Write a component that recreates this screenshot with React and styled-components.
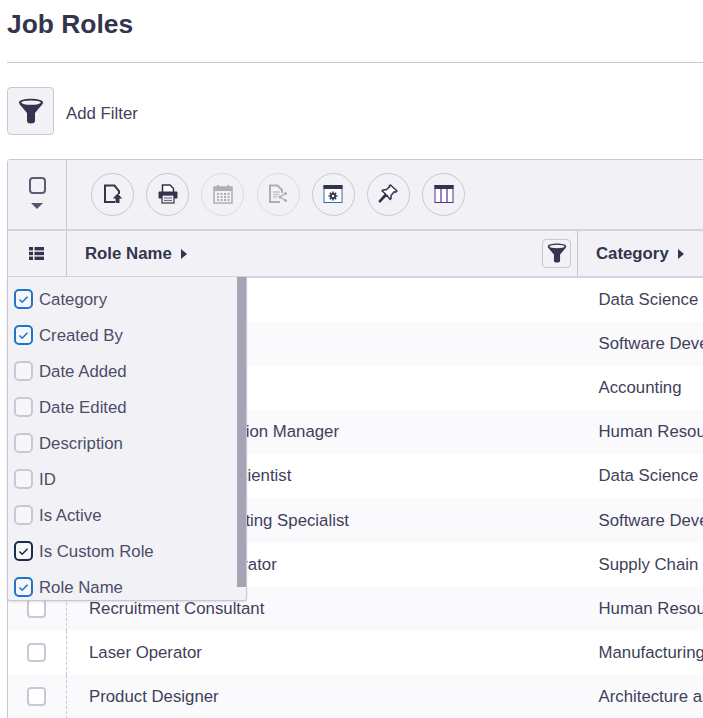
import React from 'react';
import styled, { createGlobalStyle } from 'styled-components';

const INK = '#34344e';
const LINE = '#c8c7d4';
const PANEL = '#f2f2f6';

const Global = createGlobalStyle`
  html, body { margin: 0; padding: 0; background: #fff; overflow: hidden; height: 718px; }
  body { font-family: "Liberation Sans", Arial, sans-serif; color: ${INK}; }
  * { box-sizing: border-box; }
`;
const Page = styled.div`
  position: relative;
  width: 703px;
  height: 718px;
  overflow: hidden;
  padding-left: 7px;
`;
const Title = styled.h1`
  margin: 0;
  height: 63px;
  padding-top: 10px;
  font-size: 26.4px;
  line-height: 29px;
  font-weight: 700;
  border-bottom: 1px solid ${LINE};
  color: ${INK};
`;
const FilterRow = styled.div`
  display: flex;
  align-items: center;
  gap: 12px;
  margin-top: 23px;
  height: 49px;
`;
const FilterButton = styled.button`
  width: 47px;
  height: 48px;
  padding: 0;
  border: 1px solid ${LINE};
  border-radius: 4px;
  background: ${PANEL};
  display: flex;
  align-items: center;
  justify-content: center;
`;
const FilterLabel = styled.span`
  font-size: 16.8px;
  padding-top: 6px;
  color: #3f3f5a;
`;
const Table = styled.div`
  position: relative;
  margin-top: 24px;
  width: 900px;
  border-left: 1px solid ${LINE};
  border-top: 1px solid ${LINE};
  border-top-left-radius: 4px;
`;
const Toolbar = styled.div`
  display: flex;
  height: 71px;
  background: ${PANEL};
  border-bottom: 2px solid #d4d3dd;
`;
const SelectCell = styled.div`
  width: 59px;
  border-right: 1px solid ${LINE};
  display: flex;
  flex-direction: column;
  align-items: center;
  padding-top: 17px;
  gap: 9px;
`;
const BigCheck = styled.span`
  width: 17px;
  height: 17px;
  border: 2px solid #5c5c74;
  border-radius: 4px;
`;
const Caret = styled.span`
  width: 0;
  height: 0;
  border-left: 6px solid transparent;
  border-right: 6px solid transparent;
  border-top: 6px solid #55556c;
`;
const Tools = styled.div`
  display: flex;
  align-items: center;
  gap: 12.2px;
  padding-left: 24px;
  margin-top: -1px;
`;
const Round = styled.button`
  width: 43px;
  height: 43px;
  padding: 0;
  border-radius: 50%;
  border: 1px solid ${p => (p.$off ? '#dcdbe3' : LINE)};
  background: ${PANEL};
  display: flex;
  align-items: center;
  justify-content: center;
`;
const HeaderRow = styled.div`
  display: flex;
  height: 47px;
  background: ${PANEL};
  border-bottom: 2px solid #d4d3dd;
`;
const HeadIcon = styled.div`
  width: 59px;
  border-right: 1px solid ${LINE};
  display: flex;
  align-items: center;
  justify-content: center;
  padding: 0 2px 1px 0;
`;
const HeadCell = styled.div`
  width: ${p => p.$w}px;
  display: flex;
  align-items: center;
  justify-content: space-between;
  border-right: 1px solid ${p => (p.$last ? 'transparent' : LINE)};
  padding: 0 6px 1px ${p => p.$pad}px;
`;
const HeadLabel = styled.span`
  display: flex;
  align-items: center;
  gap: 9px;
  padding-top: 2px;
  font-size: 16.8px;
  font-weight: 700;
  color: ${INK};
`;
const RightTri = styled.span`
  width: 0;
  height: 0;
  border-top: 5px solid transparent;
  border-bottom: 5px solid transparent;
  border-left: 6px solid ${INK};
`;
const SmallFilter = styled.button`
  width: 29px;
  height: 29px;
  padding: 0;
  border: 1px solid ${LINE};
  border-radius: 4px;
  background: ${PANEL};
  display: flex;
  align-items: center;
  justify-content: center;
`;
const Row = styled.div`
  display: flex;
  height: 44.1px;
  align-items: center;
  background: ${p => (p.$alt ? '#fafafc' : '#fff')};
  font-size: 16.8px;
  color: #3f3f5a;
`;
const RowCheckCell = styled.div`
  width: 59px;
  height: 100%;
  border-right: 1px dashed ${LINE};
  display: flex;
  align-items: center;
  justify-content: center;
  padding-right: 2px;
`;
const RowCheck = styled.span`
  width: 19px;
  height: 19px;
  border: 2px solid #c9c8d5;
  border-radius: 4px;
  background: #fff;
`;
const NameCell = styled.div`
  width: 511px;
  padding-left: 22px;
  white-space: nowrap;
`;
const CategoryCell = styled.div`
  padding-left: 20.5px;
  white-space: nowrap;
`;
const Menu = styled.div`
  position: absolute;
  left: 7px;
  top: 277px;
  width: 240px;
  height: 324px;
  background: ${PANEL};
  border: 1px solid ${LINE};
  border-top: none;
  border-radius: 0 0 3px 3px;
  box-shadow: 0 1px 2px rgba(60, 60, 90, 0.15);
  padding: 4px 0 0 6px;
  overflow: hidden;
`;
const Scrollbar = styled.div`
  position: absolute;
  top: 0;
  right: 0;
  width: 9px;
  height: 310px;
  background: #a5a4b4;
`;
const MenuItem = styled.div`
  display: flex;
  align-items: center;
  gap: 6px;
  height: 36px;
  font-size: 16.8px;
  color: #4d4d68;
`;
const MenuLabel = styled.span`
  padding-top: 2px;
`;
const Box = styled.span`
  width: 19px;
  height: 20px;
  flex: none;
  border-radius: 5px;
  background: #f7f7fa;
  border: 2px solid ${p => p.$color};
  display: flex;
  align-items: center;
  justify-content: center;
`;

const Funnel = ({ size }) => (
  <svg width={size} height={size} viewBox="0 0 26 26">
    <path d="M1 4.500C1 2 7 .8 13 .8s12 1.200 12 3.700c0 1.400-1.200 2.700-3 4.600l-5 6V23c0 1.700-1.700 2.500-4 2.500S9 24.700 9 23v-7.900l-5-6C2.200 7.200 1 5.900 1 4.500z" fill={INK} />
    <ellipse cx="13" cy="4.600" rx="9.800" ry="2.200" fill="#f2f2f6" />
  </svg>
);
const ExportIcon = () => (
  <svg width="20" height="20" viewBox="0 0 20 20">
    <path d="M12 18H2V1.500h9.500L16 7v3" fill="none" stroke={INK} strokeWidth="2" />
    <path d="M14.500 9.500l4.800 5h-2.800V19h-4v-4.500H9.800z" fill={INK} />
  </svg>
);
const PrintIcon = () => (
  <svg width="20" height="20" viewBox="0 0 20 20">
    <path d="M4.500 8V1h7.500l3.500 3.500V8" fill="#fff" stroke={INK} strokeWidth="1.500" />
    <rect x="0.500" y="7.500" width="19" height="7" rx="1" fill={INK} />
    <rect x="4" y="11" width="12" height="8" fill="#e8e8ee" stroke={INK} strokeWidth="1.200" />
    <path d="M6 14h8M6 16.500h8" stroke="#6f6f85" strokeWidth="1" />
  </svg>
);
const CalendarIcon = () => (
  <svg width="20" height="20" viewBox="0 0 20 20" fill="#aeaebb">
    <path d="M1 3h18v16H1z" fill="#f2f2f6" stroke="#aeaebb" strokeWidth="1.500" />
    <rect x="1" y="3" width="18" height="4" />
    <rect x="4" y="1" width="2" height="4" />
    <rect x="14" y="1" width="2" height="4" />
    {[4, 7.500, 11, 14.500].flatMap(x => [9, 12, 15].map(y => <rect key={x + '-' + y} x={x} y={y} width="2" height="2" />))}
  </svg>
);
const ShareDocIcon = () => (
  <svg width="20" height="20" viewBox="0 0 20 20">
    <path d="M12 18H2V1.500h7.500L14 6v3" fill="none" stroke="#aeaebb" strokeWidth="2" />
    <path d="M5 8h7M5 10.500h6M5 13h4" stroke="#c2c2cc" strokeWidth="1.300" />
    <path d="M17.500 9.500L12 13l5.500 3.500" fill="none" stroke="#aeaebb" strokeWidth="1.300" />
    <circle cx="17.500" cy="9.500" r="1.600" fill="#aeaebb" />
    <circle cx="12" cy="13" r="1.600" fill="#aeaebb" />
    <circle cx="17.500" cy="16.500" r="1.600" fill="#aeaebb" />
  </svg>
);
const WindowGearIcon = () => (
  <svg width="20" height="20" viewBox="0 0 20 20">
    <rect x="1" y="1.500" width="18" height="17" fill="#fff" stroke="#2f6fb5" strokeWidth="1" />
    <rect x="0.500" y="1" width="19" height="4" fill={INK} />
    <path d="M10 7.500v9M5.500 12h9M6.800 8.800l6.400 6.400M13.200 8.800l-6.400 6.400" stroke={INK} strokeWidth="1.600" />
    <circle cx="10" cy="12" r="3" fill={INK} />
    <circle cx="10" cy="12" r="1.200" fill="#fff" />
  </svg>
);
const PinIcon = () => (
  <svg width="22" height="22" viewBox="0 0 22 22">
    <path d="M13.500 2l6.500 6-1.500 1.300-1.300-.5-3.200 3.700c.5 1.700.1 3-.7 3.900L9.500 12 3 19l-.8-.8L8.500 11 5 7.700c1-.9 2.400-1.200 3.900-.7l3.700-3.100-.4-1.100z" fill="#fff" stroke={INK} strokeWidth="1.500" strokeLinejoin="round" />
  </svg>
);
const ColumnsIcon = () => (
  <svg width="20" height="20" viewBox="0 0 20 20">
    <rect x="1" y="1.500" width="18" height="17" fill="#fff" stroke="#5a2f8c" strokeWidth="1" />
    <rect x="0.500" y="1" width="19" height="4" fill={INK} />
    <path d="M7 5v13.500M13 5v13.500" stroke="#5a2f8c" strokeWidth="1.200" />
  </svg>
);
const ListIcon = () => (
  <svg width="15" height="13" viewBox="0 0 15 13" fill={INK}>
    <rect x="0" y="0" width="4" height="3.400" />
    <rect x="0" y="4.800" width="4" height="3.400" />
    <rect x="0" y="9.600" width="4" height="3.400" />
    <rect x="5.500" y="0" width="9.500" height="3.400" />
    <rect x="5.500" y="4.800" width="9.500" height="3.400" />
    <rect x="5.500" y="9.600" width="9.500" height="3.400" />
  </svg>
);
const Tick = ({ color }) => (
  <svg width="11" height="9" viewBox="0 0 12 10">
    <path d="M1.500 5l3 3 6-6" fill="none" stroke={color} strokeWidth="1.800" />
  </svg>
);

const rows = [
  ['Data Engineer', 'Data Science'],
  ['Web Developer', 'Software Development'],
  ['Accountant', 'Accounting'],
  ['Applicant Administration Manager', 'Human Resources'],
  ['Medical Research Scientist', 'Data Science'],
  ['Software Manual Testing Specialist', 'Software Development'],
  ['Warehouse Administrator', 'Supply Chain'],
  ['Recruitment Consultant', 'Human Resources'],
  ['Laser Operator', 'Manufacturing'],
  ['Product Designer', 'Architecture and Design'],
];
const items = [
  ['Category', '#1f76c9'],
  ['Created By', '#1f76c9'],
  ['Date Added'],
  ['Date Edited'],
  ['Description'],
  ['ID'],
  ['Is Active'],
  ['Is Custom Role', '#1c2b4a'],
  ['Role Name', '#1f76c9'],
];

export default function App() {
  return (
    <Page>
      <Global />
      <Title>Job Roles</Title>
      <FilterRow>
        <FilterButton><Funnel size={26} /></FilterButton>
        <FilterLabel>Add Filter</FilterLabel>
      </FilterRow>
      <Table>
        <Toolbar>
          <SelectCell><BigCheck /><Caret /></SelectCell>
          <Tools>
            <Round><ExportIcon /></Round>
            <Round><PrintIcon /></Round>
            <Round $off><CalendarIcon /></Round>
            <Round $off><ShareDocIcon /></Round>
            <Round><WindowGearIcon /></Round>
            <Round><PinIcon /></Round>
            <Round><ColumnsIcon /></Round>
          </Tools>
        </Toolbar>
        <HeaderRow>
          <HeadIcon><ListIcon /></HeadIcon>
          <HeadCell $w={511} $pad={18}>
            <HeadLabel>Role Name <RightTri /></HeadLabel>
            <SmallFilter><Funnel size={20} /></SmallFilter>
          </HeadCell>
          <HeadCell $w={300} $pad={18} $last>
            <HeadLabel>Category <RightTri /></HeadLabel>
          </HeadCell>
        </HeaderRow>
        {rows.map(([name, category], i) => (
          <Row key={name} $alt={i % 2 === 1}>
            <RowCheckCell><RowCheck /></RowCheckCell>
            <NameCell>{name}</NameCell>
            <CategoryCell>{category}</CategoryCell>
          </Row>
        ))}
      </Table>
      <Menu>
        <Scrollbar />
        {items.map(([label, color]) => (
          <MenuItem key={label}>
            <Box $color={color || '#c9c8d5'}>{color && <Tick color={color} />}</Box>
            <MenuLabel>{label}</MenuLabel>
          </MenuItem>
        ))}
      </Menu>
    </Page>
  );
}
